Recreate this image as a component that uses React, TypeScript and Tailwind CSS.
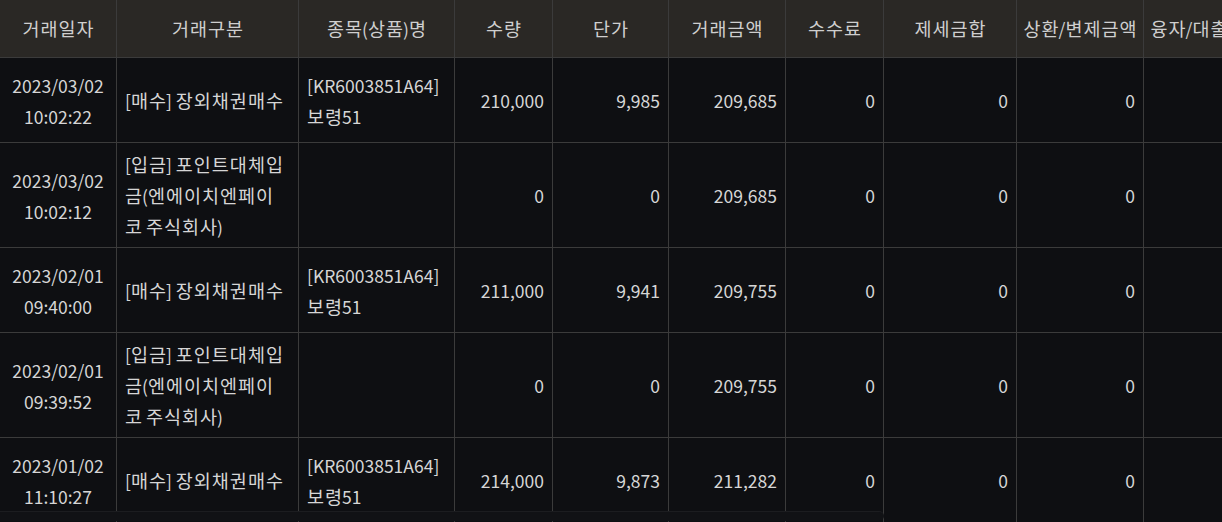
import type { ReactNode } from 'react'

// Hangul runs are set a bit larger so they sit as wide as in the original font
function K({ t }: { t: string }) {
  const parts = t.split(/([\uAC00-\uD7A3]+)/)
  return (
    <>
      {parts.map((p, i) =>
        /[\uAC00-\uD7A3]/.test(p) ? (
          <span key={i} className="mr-[-1px] text-[18.5px] tracking-[1px]">
            {p}
          </span>
        ) : (
          p
        ),
      )}
    </>
  )
}

type Row = {
  date: string
  time: string
  kind: string[]
  item: string[]
  qty: string
  price: string
  amount: string
}

const buyKind = ['[매수] 장외채권매수']
const depositKind = ['[입금] 포인트대체입', '금(엔에이치엔페이', '코 주식회사)']
const bond = ['[KR6003851A64]', '보령51']

const rows: Row[] = [
  { date: '2023/03/02', time: '10:02:22', kind: buyKind, item: bond, qty: '210,000', price: '9,985', amount: '209,685' },
  { date: '2023/03/02', time: '10:02:12', kind: depositKind, item: [], qty: '0', price: '0', amount: '209,685' },
  { date: '2023/02/01', time: '09:40:00', kind: buyKind, item: bond, qty: '211,000', price: '9,941', amount: '209,755' },
  { date: '2023/02/01', time: '09:39:52', kind: depositKind, item: [], qty: '0', price: '0', amount: '209,755' },
  { date: '2023/01/02', time: '11:10:27', kind: buyKind, item: bond, qty: '214,000', price: '9,873', amount: '211,282' },
]

const headers = ['거래일자', '거래구분', '종목(상품)명', '수량', '단가', '거래금액', '수수료', '제세금합', '상환/변제금액', '융자/대출금액']
const widths = [117, 182, 156, 98, 116, 117, 98, 133, 127, 127]

const cell = 'border border-[#3b3b3b] px-2 pt-[6px] pb-[5px] h-[85px] leading-[31px] align-middle whitespace-nowrap'

function Lines({ lines }: { lines: string[] }): ReactNode {
  return lines.map((l, i) => (
    <div key={i}>
      <K t={l} />
    </div>
  ))
}

export default function App() {
  return (
    <div
      className="relative h-[522px] w-[1222px] overflow-hidden bg-[#0e0f12] text-[17.5px] text-[#d6d6d6]"
      style={{ fontFamily: '"Noto Sans CJK KR", "Noto Sans", sans-serif' }}
    >
      <table className="-ml-px -mt-px table-fixed border-collapse" style={{ width: 1272 }}>
        <colgroup>
          {widths.map((w, i) => (
            <col key={i} style={{ width: w }} />
          ))}
        </colgroup>
        <thead>
          <tr className="bg-[#2a2825]">
            {headers.map((h) => (
              <th
                key={h}
                className="h-[58px] whitespace-nowrap border border-[#3b3b3b] px-1 text-center font-normal leading-[31px] text-[#cfcfcf]"
              >
                <K t={h} />
              </th>
            ))}
          </tr>
        </thead>
        <tbody>
          {rows.map((r, i) => (
            <tr key={i}>
              <td className={`${cell} text-center`}>
                {r.date}
                <br />
                {r.time}
              </td>
              <td className={`${cell} text-left`}>
                <Lines lines={r.kind} />
              </td>
              <td className={`${cell} text-left`}>
                <Lines lines={r.item} />
              </td>
              <td className={`${cell} text-right`}>{r.qty}</td>
              <td className={`${cell} text-right`}>{r.price}</td>
              <td className={`${cell} text-right`}>{r.amount}</td>
              <td className={`${cell} text-right`}>0</td>
              <td className={`${cell} text-right`}>0</td>
              <td className={`${cell} text-right`}>0</td>
              <td className={cell}></td>
            </tr>
          ))}
        </tbody>
      </table>
      <div className="absolute bottom-[1px] left-0 h-[10px] w-[884px] rounded-r-[5px] border-t border-[#1c1d20] bg-[#111215]" />
    </div>
  )
}
